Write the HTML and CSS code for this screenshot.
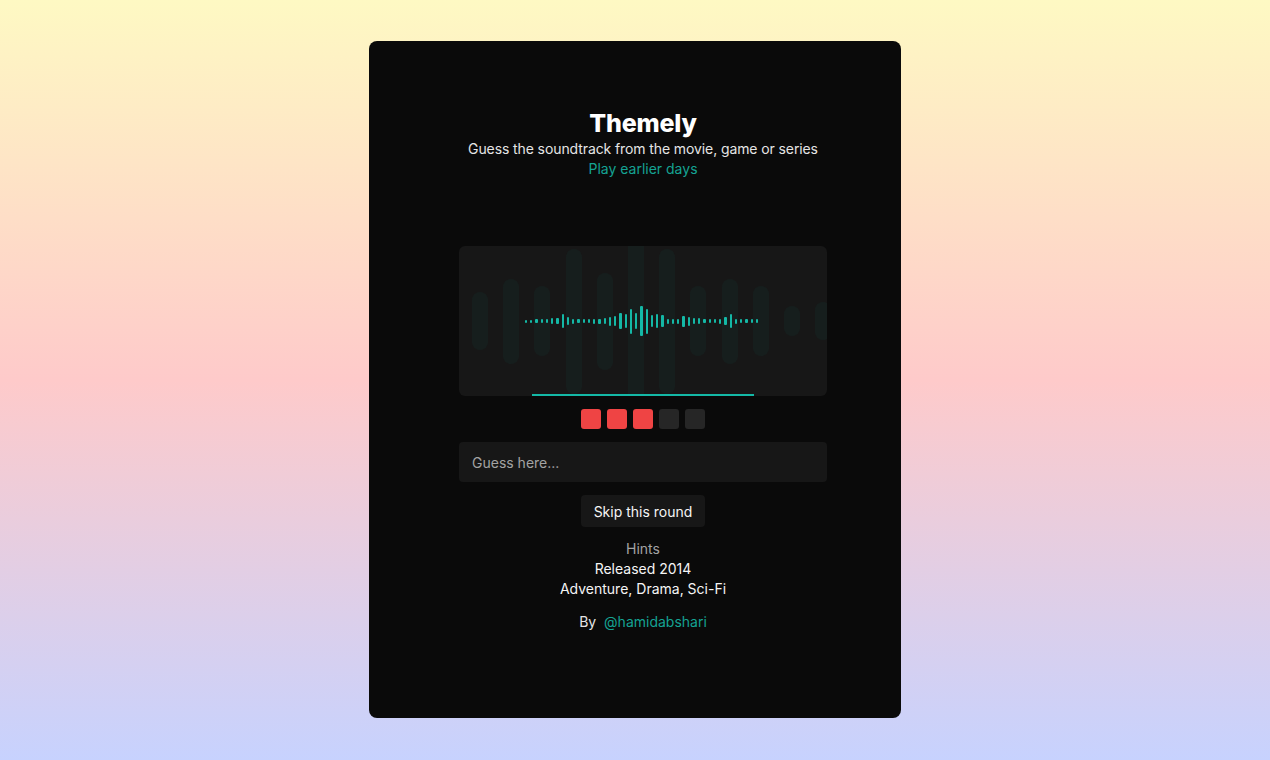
FILE: index.html
```html
<!DOCTYPE html>
<html lang="en">
<head>
  <meta charset="UTF-8" />
  <meta name="viewport" content="width=device-width, initial-scale=1.0" />
  <title>Themely</title>
  <link rel="stylesheet" href="styles.css">
</head>
<body>
  <main class="card">
    <header class="head">
      <h1 class="title">Themely</h1>
      <p class="subtitle">Guess the soundtrack from the movie, game or series</p>
      <a class="link" href="#">Play earlier days</a>
    </header>

    <section class="player">
      <div class="ghosts" id="ghosts"></div>
      <div class="wave" id="wave"></div>
      <div class="progress"></div>
    </section>

    <div class="tries">
      <span class="try miss"></span>
      <span class="try miss"></span>
      <span class="try miss"></span>
      <span class="try"></span>
      <span class="try"></span>
    </div>

    <input class="guess" type="text" placeholder="Guess here..." />

    <button class="skip">Skip this round</button>

    <div class="hints">
      <span class="hints-label">Hints</span>
      <span>Released 2014</span>
      <span>Adventure, Drama, Sci-Fi</span>
    </div>

    <p class="by">By&nbsp; <a class="link" href="#">@hamidabshari</a></p>
  </main>

  <script>
    // background columns behind the waveform
    const ghosts = [58, 85, 70, 145, 97, 150, 145, 70, 85, 70, 30, 38];
    const ghostBox = document.getElementById('ghosts');
    ghosts.forEach((h, i) => {
      const el = document.createElement('span');
      el.className = i === 5 ? 'ghost flat' : 'ghost';
      el.style.height = h + 'px';
      ghostBox.appendChild(el);
    });

    // waveform
    const wave = [3, 3, 4, 4, 4, 6, 6, 14, 8, 5, 4, 4, 4, 5, 5, 6, 9, 10, 16, 14, 25, 16, 30, 25, 12,
      14, 12, 5, 5, 5, 11, 9, 6, 6, 4, 4, 4, 5, 8, 14, 5, 4, 4, 4, 4];
    const waveBox = document.getElementById('wave');
    wave.forEach(h => {
      const el = document.createElement('span');
      el.className = 'bar';
      el.style.height = h + 'px';
      waveBox.appendChild(el);
    });
  </script>
</body>
</html>
```

FILE: styles.css
```css
body {
  margin: 0;
  min-height: 100vh;
  display: flex;
  align-items: center;
  justify-content: center;
  font-family: "Inter", "Noto Sans", sans-serif;
  background: linear-gradient(to bottom, #fef9c3, #fecaca, #c7d2fe);
}

.card {
  box-sizing: border-box;
  width: 532px;
  height: 677px;
  margin-top: -1px;
  padding: 66px 74px 0 90px;
  background: #0a0a0a;
  border-radius: 8px;
  display: flex;
  flex-direction: column;
  align-items: center;
  gap: 13px;
}

.head {
  display: flex;
  flex-direction: column;
  align-items: center;
  margin-bottom: 54px;
}

.title {
  margin: 0;
  font-size: 25px;
  line-height: 32px;
  font-weight: 800;
  letter-spacing: -0.2px;
  color: #fff;
}

.subtitle {
  margin: 0;
  font-size: 14px;
  line-height: 20px;
  letter-spacing: -0.1px;
  color: #e5e5e5;
}

.link {
  font-size: 14px;
  line-height: 20px;
  color: #15a393;
  text-decoration: none;
}

.player {
  position: relative;
  width: 100%;
  height: 150px;
  background: #171717;
  border-radius: 6px;
  overflow: hidden;
}

.ghosts {
  height: 100%;
  padding-left: 13px;
  display: flex;
  align-items: center;
  gap: 15.2px;
}

.ghost {
  flex: none;
  width: 16px;
  border-radius: 8px;
  background: rgba(20, 184, 166, 0.05);
}

.ghost.flat {
  border-radius: 0;
}

.wave {
  position: absolute;
  inset: 0 0 0 -3px;
  display: flex;
  align-items: center;
  justify-content: center;
  gap: 3px;
}

.bar {
  flex: none;
  width: 2.25px;
  border-radius: 1px;
  background: #14b8a6;
}

.progress {
  position: absolute;
  left: 73px;
  bottom: 0;
  width: 222px;
  height: 2px;
  background: #14b8a6;
}

.tries {
  display: flex;
  gap: 6px;
}

.try {
  width: 20px;
  height: 20px;
  border-radius: 3px;
  background: #262626;
}

.try.miss {
  background: #ef4444;
}

.guess {
  box-sizing: border-box;
  width: 100%;
  height: 40px;
  padding: 0 13px;
  border: none;
  border-radius: 4px;
  background: #171717;
  color: #fff;
  font-family: inherit;
  font-size: 14px;
  outline: none;
}

.guess::placeholder {
  color: #a3a3a3;
}

.skip {
  height: 32px;
  padding: 0 13px;
  border: none;
  border-radius: 4px;
  background: #171717;
  color: #f5f5f5;
  font-family: inherit;
  font-size: 14px;
}

.hints {
  margin-top: -1px;
  display: flex;
  flex-direction: column;
  align-items: center;
  font-size: 14px;
  line-height: 20px;
  color: #f5f5f5;
}

.hints-label {
  color: #a3a3a3;
}

.by {
  margin: 0;
  font-size: 14px;
  line-height: 20px;
  color: #e5e5e5;
}
```
